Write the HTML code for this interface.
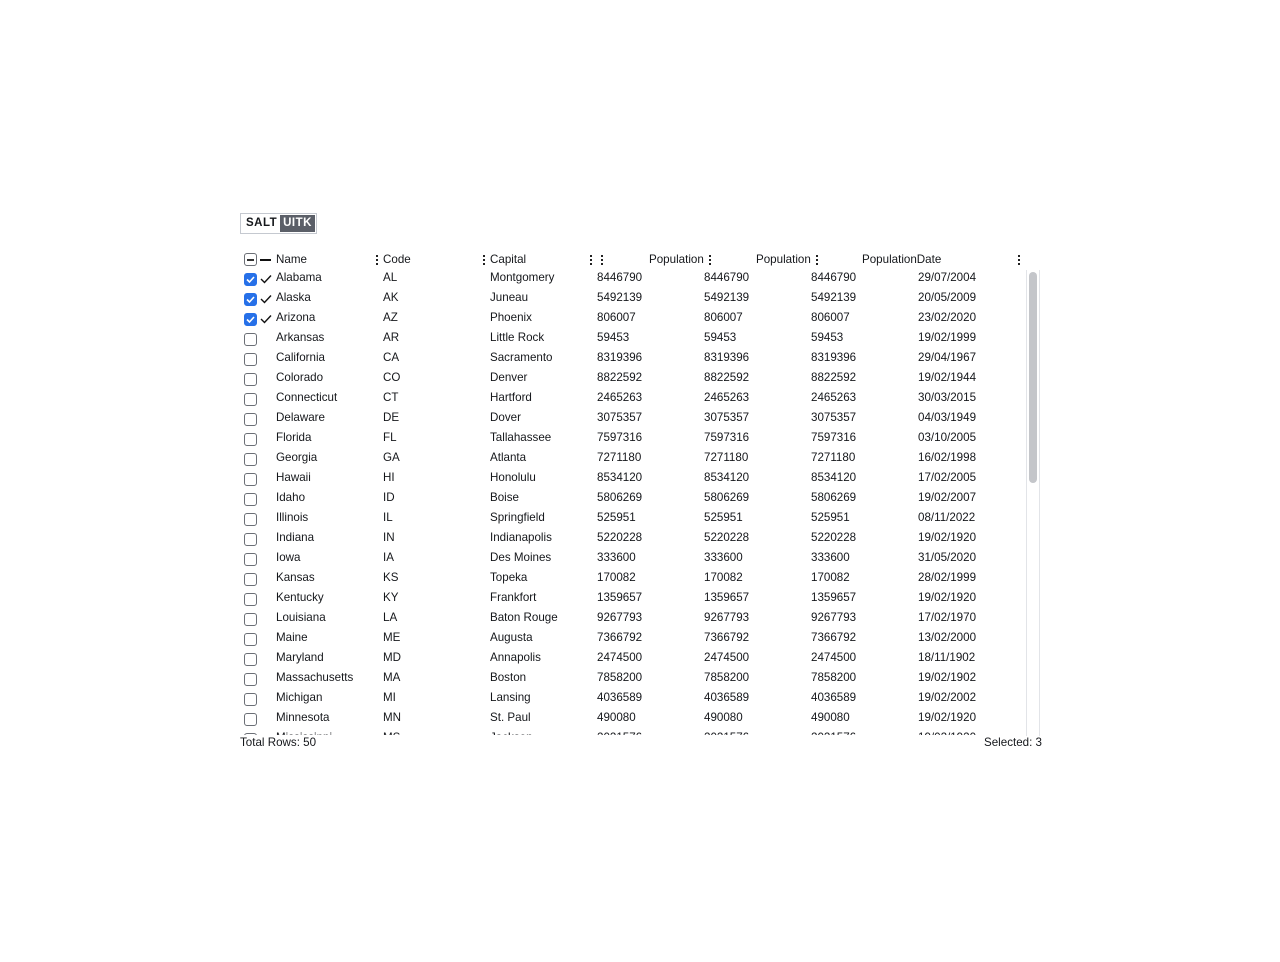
<!DOCTYPE html>
<html><head><meta charset="utf-8"><style>
body{margin:0;width:1280px;height:962px;background:#fff;font-family:"Liberation Sans",sans-serif;font-size:11.6px;color:#15171b;position:relative;overflow:hidden}
.tog{position:absolute;left:240px;top:213px;width:77px;height:21px;border:1px solid #c5c9d0;box-sizing:border-box}
.tog .a{position:absolute;left:5px;top:3px;font-weight:bold;font-size:11.5px;letter-spacing:.5px}
.uitk{position:absolute;left:280px;top:215px;width:35px;height:17px;background:#5b5f68;color:#fff;font-weight:bold;font-size:11.5px;letter-spacing:.5px;line-height:17px;text-align:center}
.grid{position:absolute;left:240px;top:250px;width:800px;height:485px;overflow:hidden}
.r{position:absolute;left:0;height:20px;width:790px;line-height:20px;white-space:nowrap}
.r span{position:absolute}
.cb{position:absolute;left:4px;top:5px;width:13px;height:13px;border:1px solid #6b6f76;border-radius:3px;box-sizing:border-box}
.cb.on{background:#2670e8;border-color:#2670e8}
.ck{position:absolute;left:20px;top:5px}
.k{position:absolute;width:2px;top:5px}
.k i{display:block;width:2px;height:2px;background:#222;margin-bottom:2px}
.sb{position:absolute;left:1026px;top:270px;width:14px;height:466px;border-left:1px solid #e2e4e8;border-right:1px solid #e2e4e8;box-sizing:border-box}
.th{position:absolute;left:1029px;top:272px;width:8px;height:211px;background:#c4c6ca;border-radius:4px}
.ft{position:absolute;top:736px;font-size:11.6px}
</style></head><body>
<div class="tog"><span class="a">SALT</span></div>
<div class="uitk">UITK</div>
<div class="grid">
<div class="r" style="top:0px">
<div class="cb" style="top:3px"><div style="position:absolute;left:2px;top:5px;width:7px;height:1.5px;background:#333"></div></div>
<div style="position:absolute;left:20px;top:9px;width:11px;height:2px;background:#111"></div>
<span style="left:36px">Name</span>
<div class="k" style="left:136px"><i></i><i></i><i></i></div><span style="left:143px">Code</span>
<div class="k" style="left:243px"><i></i><i></i><i></i></div><span style="left:250px">Capital</span>
<div class="k" style="left:350px"><i></i><i></i><i></i></div><div class="k" style="left:361px"><i></i><i></i><i></i></div>
<span style="left:409px">Population</span><div class="k" style="left:469px"><i></i><i></i><i></i></div>
<span style="left:516px">Population</span><div class="k" style="left:576px"><i></i><i></i><i></i></div>
<span style="left:622px">PopulationDate</span>
<div class="k" style="left:778px"><i></i><i></i><i></i></div>
</div>
<div id="rows"></div>
</div>
<div class="sb"></div><div class="th"></div>
<div class="ft" style="left:240px">Total Rows: 50</div>
<div class="ft" style="left:984px">Selected: 3</div>
<script>
var d=[["Alabama","AL","Montgomery","8446790","29/07/2004"],["Alaska","AK","Juneau","5492139","20/05/2009"],["Arizona","AZ","Phoenix","806007","23/02/2020"],["Arkansas","AR","Little Rock","59453","19/02/1999"],["California","CA","Sacramento","8319396","29/04/1967"],["Colorado","CO","Denver","8822592","19/02/1944"],["Connecticut","CT","Hartford","2465263","30/03/2015"],["Delaware","DE","Dover","3075357","04/03/1949"],["Florida","FL","Tallahassee","7597316","03/10/2005"],["Georgia","GA","Atlanta","7271180","16/02/1998"],["Hawaii","HI","Honolulu","8534120","17/02/2005"],["Idaho","ID","Boise","5806269","19/02/2007"],["Illinois","IL","Springfield","525951","08/11/2022"],["Indiana","IN","Indianapolis","5220228","19/02/1920"],["Iowa","IA","Des Moines","333600","31/05/2020"],["Kansas","KS","Topeka","170082","28/02/1999"],["Kentucky","KY","Frankfort","1359657","19/02/1920"],["Louisiana","LA","Baton Rouge","9267793","17/02/1970"],["Maine","ME","Augusta","7366792","13/02/2000"],["Maryland","MD","Annapolis","2474500","18/11/1902"],["Massachusetts","MA","Boston","7858200","19/02/1902"],["Michigan","MI","Lansing","4036589","19/02/2002"],["Minnesota","MN","St. Paul","490080","19/02/1920"],["Mississippi","MS","Jackson","2021576","19/02/1920"]];
var h="";d.forEach(function(r,i){var on=i<3;h+='<div class="r" style="top:'+(18+20*i)+'px"><div class="cb'+(on?' on':'')+'">'+(on?'<svg width="11" height="11" style="position:absolute;left:0;top:0"><path d="M2 5.5l2.5 2.5 4.5-5" stroke="#fff" stroke-width="1.6" fill="none"/></svg>':'')+'</div>'+(on?'<svg class="ck" width="12" height="12"><path d="M1 6l3.5 3.5 6.5-7" stroke="#111" stroke-width="1.4" fill="none"/></svg>':'')+'<span style="left:36px">'+r[0]+'</span><span style="left:143px">'+r[1]+'</span><span style="left:250px">'+r[2]+'</span><span style="left:357px">'+r[3]+'</span><span style="left:464px">'+r[3]+'</span><span style="left:571px">'+r[3]+'</span><span style="left:678px">'+r[4]+'</span></div>'});
document.getElementById("rows").innerHTML=h;
</script>
</body></html>
